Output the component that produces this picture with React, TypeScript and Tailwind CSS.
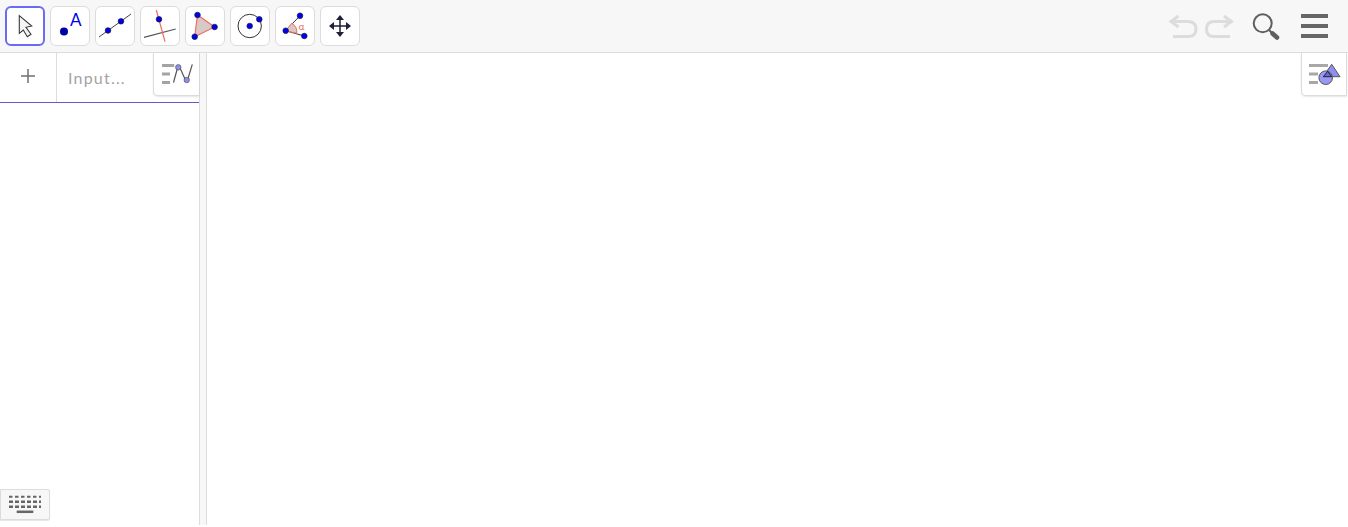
import React from "react";

const Tool = ({ active, children }: { active?: boolean; children: React.ReactNode }) => (
  <button className={active ? "w-10 h-10 rounded-[6px] border-2 border-[#6a6af5] bg-white flex items-center justify-center" : "w-10 h-10 rounded-[6px] border border-[#dcdcdc] bg-white flex items-center justify-center"}>
    {children}
  </button>
);
const B = "#0000f0";
const Svg = ({ children }: { children: React.ReactNode }) => (
  <svg width="40" height="40" viewBox="0 0 40 40" className="shrink-0">{children}</svg>
);
const Dot = ({ x, y, r = 2.8 }: { x: number; y: number; r?: number }) => (
  <circle cx={x} cy={y} r={r} fill={B} stroke="#1a1a40" strokeWidth="0.7" />
);

export default function App() {
  return (
    <div className="relative w-[1348px] h-[525px] bg-white overflow-hidden font-['Lato',sans-serif]">
      <div className="h-[53px] bg-[#f7f7f7] border-b border-[#dcdcdc] flex items-start justify-between pt-[6px] pl-[5px]">
        <div className="flex gap-[5px]">
          <Tool active>
            <svg width="36" height="36" viewBox="0 0 36 36" className="shrink-0">
              <path d="M12.300 7.700 L12.300 25.300 L16.300 22 L20.300 28.700 L24 26.300 L19 19.300 L24.700 18 Z" fill="#f4f4f4" stroke="#3a3a3a" strokeWidth="1.100" />
            </svg>
          </Tool>
          <Tool>
            <Svg><circle cx="14" cy="25.500" r="4" fill="#0000a8" /><text x="20" y="19.500" fontSize="17" fontWeight="400" fill={B} fontFamily="Lato, sans-serif">A</text></Svg>
          </Tool>
          <Tool>
            <Svg><line x1="4" y1="31" x2="36" y2="8" stroke="#444" strokeWidth="1" /><Dot x={13} y={24.500} /><Dot x={26} y={15.300} /></Svg>
          </Tool>
          <Tool>
            <Svg><line x1="4" y1="31.300" x2="35.700" y2="23" stroke="#555" strokeWidth="1.200" /><line x1="16.300" y1="4" x2="25" y2="35.700" stroke="#ee6b62" strokeWidth="1.200" /><Dot x={19} y={13.300} /></Svg>
          </Tool>
          <Tool>
            <Svg><polygon points="12.500,9 29.600,21 9.700,30.700" fill="#d9c9c6" stroke="#ee6b62" strokeWidth="1.200" /><Dot x={12.500} y={9} /><Dot x={29.600} y={21} /><Dot x={9.700} y={30.700} /></Svg>
          </Tool>
          <Tool>
            <Svg><circle cx="19.700" cy="20" r="11.700" fill="none" stroke="#333" strokeWidth="1" /><Dot x={19.700} y={20} /><Dot x={29.300} y={13.300} /></Svg>
          </Tool>
          <Tool>
            <Svg><line x1="10.700" y1="24.700" x2="25" y2="9.700" stroke="#333" strokeWidth="1" /><line x1="10.700" y1="24.700" x2="29.300" y2="30" stroke="#333" strokeWidth="1" /><path d="M10.700 24.700 L16.700 17.300 A10 10 0 0 1 21.700 27.300 Z" fill="#d9c9c6" stroke="#ee6b62" strokeWidth="1" /><Dot x={10.700} y={24.700} /><Dot x={25} y={9.700} /><Dot x={29.300} y={30} /><text x="23.500" y="23.500" fontSize="10" fill="#ee6b62" fontFamily="Lato, sans-serif">α</text></Svg>
          </Tool>
          <Tool>
            <Svg><path d="M20 12V28M12 20H28" stroke="#1f1f3a" strokeWidth="1.500" /><path d="M20 9l4 5h-8zM20 31l4-5h-8zM9 20l5-4v8zM31 20l-5-4v8z" fill="#1f1f3a" /></Svg>
          </Tool>
        </div>
        <div className="flex items-center h-10 pr-[20px]">
          <svg width="34" height="40" viewBox="0 0 34 40">
            <path d="M5 15.500H22Q30 15.500 30 23Q30 30.500 22 30.500H7M12.500 10L5 15.500L12.500 21" fill="none" stroke="#dcdcdc" strokeWidth="3" />
          </svg>
          <svg width="34" height="40" viewBox="0 0 34 40" className="mr-[16px]">
            <path d="M31.500 15.500H14Q6.500 15.500 6.500 23Q6.500 30.500 14 30.500H30M24 10L31.500 15.500L24 21" fill="none" stroke="#dcdcdc" strokeWidth="3" />
          </svg>
          <svg width="32" height="40" viewBox="0 0 32 40" className="mr-[19px]">
            <circle cx="12.700" cy="17.300" r="9" fill="none" stroke="#5f5f5f" strokeWidth="2" />
            <path d="M19 24L22 27" stroke="#5f5f5f" strokeWidth="2" />
            <path d="M22.500 27.500L27 31.500" stroke="#5f5f5f" strokeWidth="4.500" strokeLinecap="round" />
          </svg>
          <div className="flex flex-col gap-[6.500px] w-[27px]">
            <div className="h-[3.500px] bg-[#666]" /><div className="h-[3.500px] bg-[#666]" /><div className="h-[3.500px] bg-[#666]" />
          </div>
        </div>
      </div>

      <div className="flex h-[472px]">
        <div className="w-[199px] relative">
          <div className="h-[50px] flex border-b border-[#6557d2]">
            <div className="w-[57px] border-r border-[#dcdcdc] flex items-center justify-center">
              <svg width="16" height="16" viewBox="0 0 16 16" className="mb-[3px]"><path d="M8 1V15M1 8H15" stroke="#707070" strokeWidth="1.500" /></svg>
            </div>
            <div className="pl-[11px] pt-[15px] text-[16px] leading-5 tracking-[1.2px] text-[#a3a3a3]">Input...</div>
          </div>
          <div className="absolute left-[153px] top-0 w-[46px] h-[43px] bg-white border-l border-b border-[#dcdcdc] rounded-bl-[5px] shadow-[0_1px_2px_rgba(0,0,0,0.1)]">
            <svg width="45" height="42" viewBox="0 0 45 42">
              <path d="M8 12.500H20.300M8 21H16M8 29.500H16" stroke="#a4a4a4" strokeWidth="3" />
              <path d="M19.500 29.500L23.500 15Q24.500 12.500 26 15L31 26Q32.700 29 34 25.500L38.300 11.300" fill="none" stroke="#555" strokeWidth="1.200" />
              <circle cx="24.300" cy="14.300" r="2.700" fill="#8f8fef" stroke="#555" strokeWidth=".7" />
              <circle cx="32.700" cy="27" r="2.700" fill="#8f8fef" stroke="#555" strokeWidth=".7" />
            </svg>
          </div>
        </div>
        <div className="w-[8px] bg-[#f7f7f7] border-x border-[#dcdcdc]" />
        <div className="flex-1 relative">
          <div className="absolute right-[1px] top-0 w-[46px] h-[43px] bg-white border-l border-b border-r border-[#dcdcdc] rounded-bl-[5px] shadow-[0_1px_2px_rgba(0,0,0,0.1)]">
            <svg width="44" height="42" viewBox="0 0 44 42">
              <path d="M7 12.500H26M7 21H16M7 29.500H16" stroke="#a8a8a8" strokeWidth="3" />
              <polygon points="29.700,11.300 38,23.700 21,23.700" fill="#8f8fef" stroke="#555" strokeWidth="1" />
              <circle cx="23.700" cy="24.700" r="6.800" fill="#9898f5" stroke="#555" strokeWidth="1" />
              <path d="M21.300 23.700L25.700 18.300L29.700 23.700Z" fill="#6a6ae0" stroke="#222" strokeWidth="1" />
            </svg>
          </div>
        </div>
      </div>

      <div className="absolute left-0 top-[489px] w-[50px] h-[31px] bg-[#f7f7f7] border border-[#dcdcdc] rounded-r-[2px] shadow-[0_1px_1px_rgba(0,0,0,0.1)] flex items-center justify-center">
        <svg width="34" height="24" viewBox="0 0 34 24" className="shrink-0">
          <path d="M1 3.800H33" stroke="#666" strokeWidth="2" strokeDasharray="3.500 2.500" />
          <path d="M1 8.800H33M1 13.800H33" stroke="#666" strokeWidth="2.500" strokeDasharray="4 2" />
          <path d="M8.700 18.800H25.300" stroke="#666" strokeWidth="2.500" />
        </svg>
      </div>
    </div>
  );
}
